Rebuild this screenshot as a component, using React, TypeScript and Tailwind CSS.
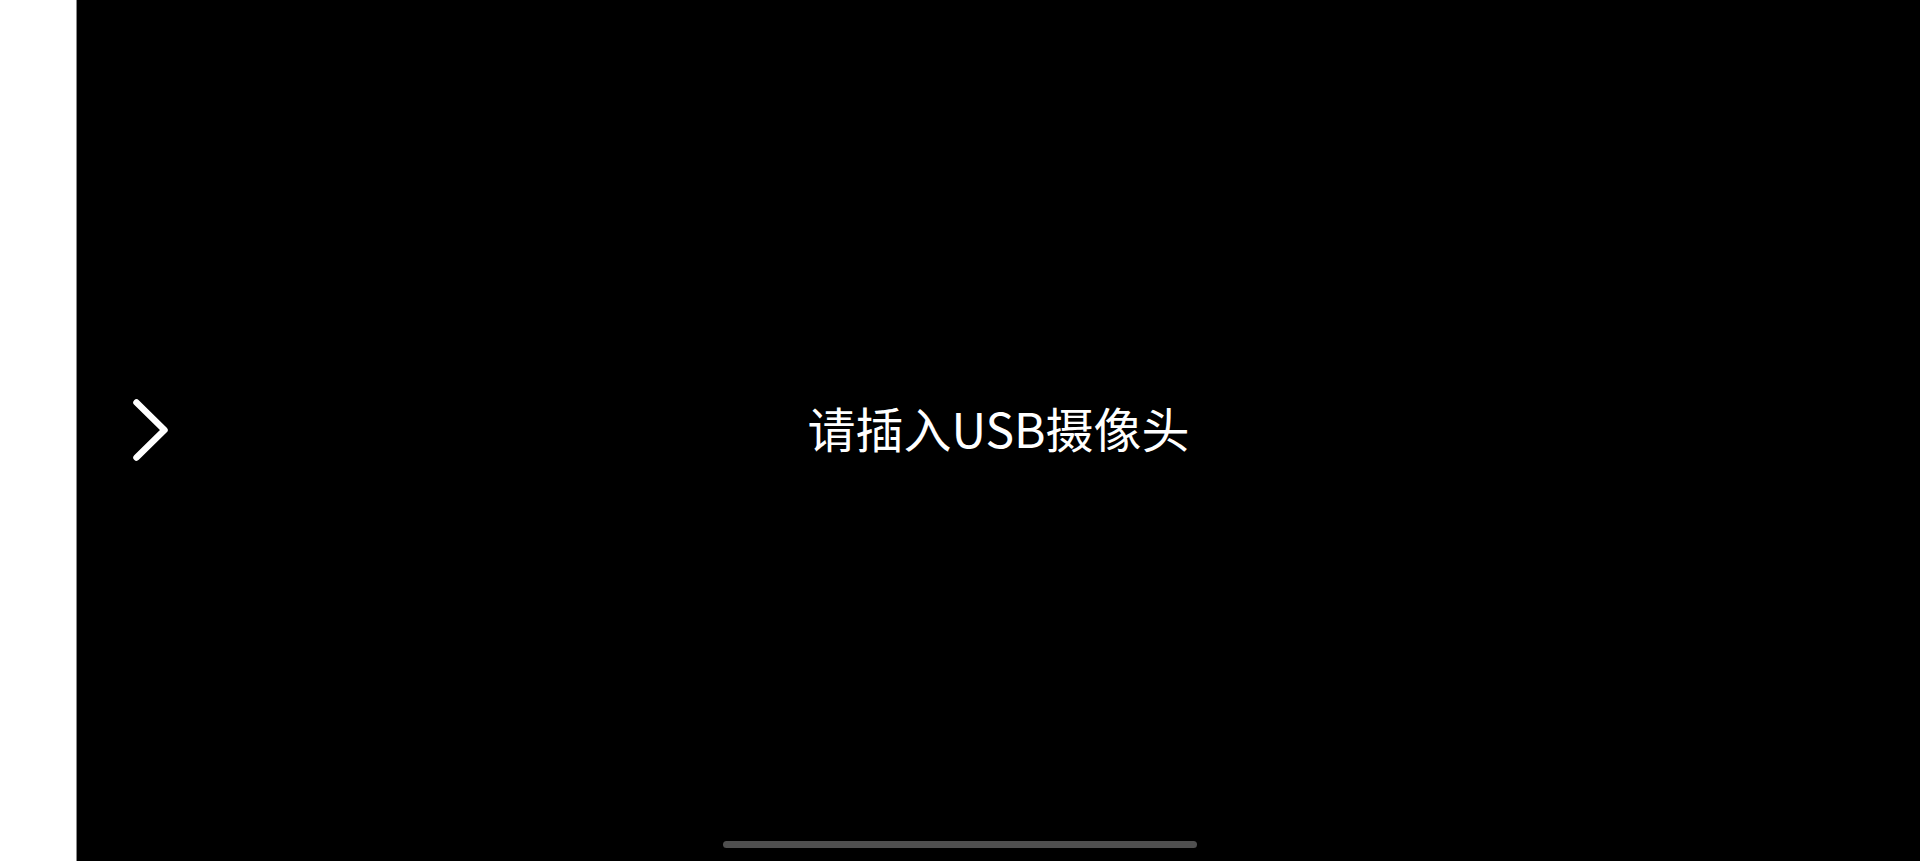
import React from 'react';

const App: React.FC = () => {
  return (
    <div className="flex h-[861px] w-full overflow-hidden bg-black font-['Noto_Sans_CJK_SC',sans-serif]">
      <div className="w-[76px] shrink-0 bg-white" />
      <div className="w-px shrink-0 bg-[#8a8a8a]" />
      <div className="relative flex flex-1 items-center justify-center bg-black">
        <button className="absolute left-[53px] top-[396px] h-[68px] w-[42px]" aria-label="展开">
          <svg width="42" height="68" viewBox="0 0 42 68" fill="none">
            <path
              d="M6.5 6.5 L34.5 34 L6.5 61.5"
              stroke="#ffffff"
              strokeWidth="6.5"
              strokeLinecap="round"
              strokeLinejoin="round"
            />
          </svg>
        </button>
        <p className="mb-[8px] text-[48px] leading-none text-white">请插入USB摄像头</p>
      </div>
      <div className="absolute left-[723px] top-[841px] h-[7px] w-[474px] rounded-full bg-[#4f4f4f]" />
    </div>
  );
};

export default App;
